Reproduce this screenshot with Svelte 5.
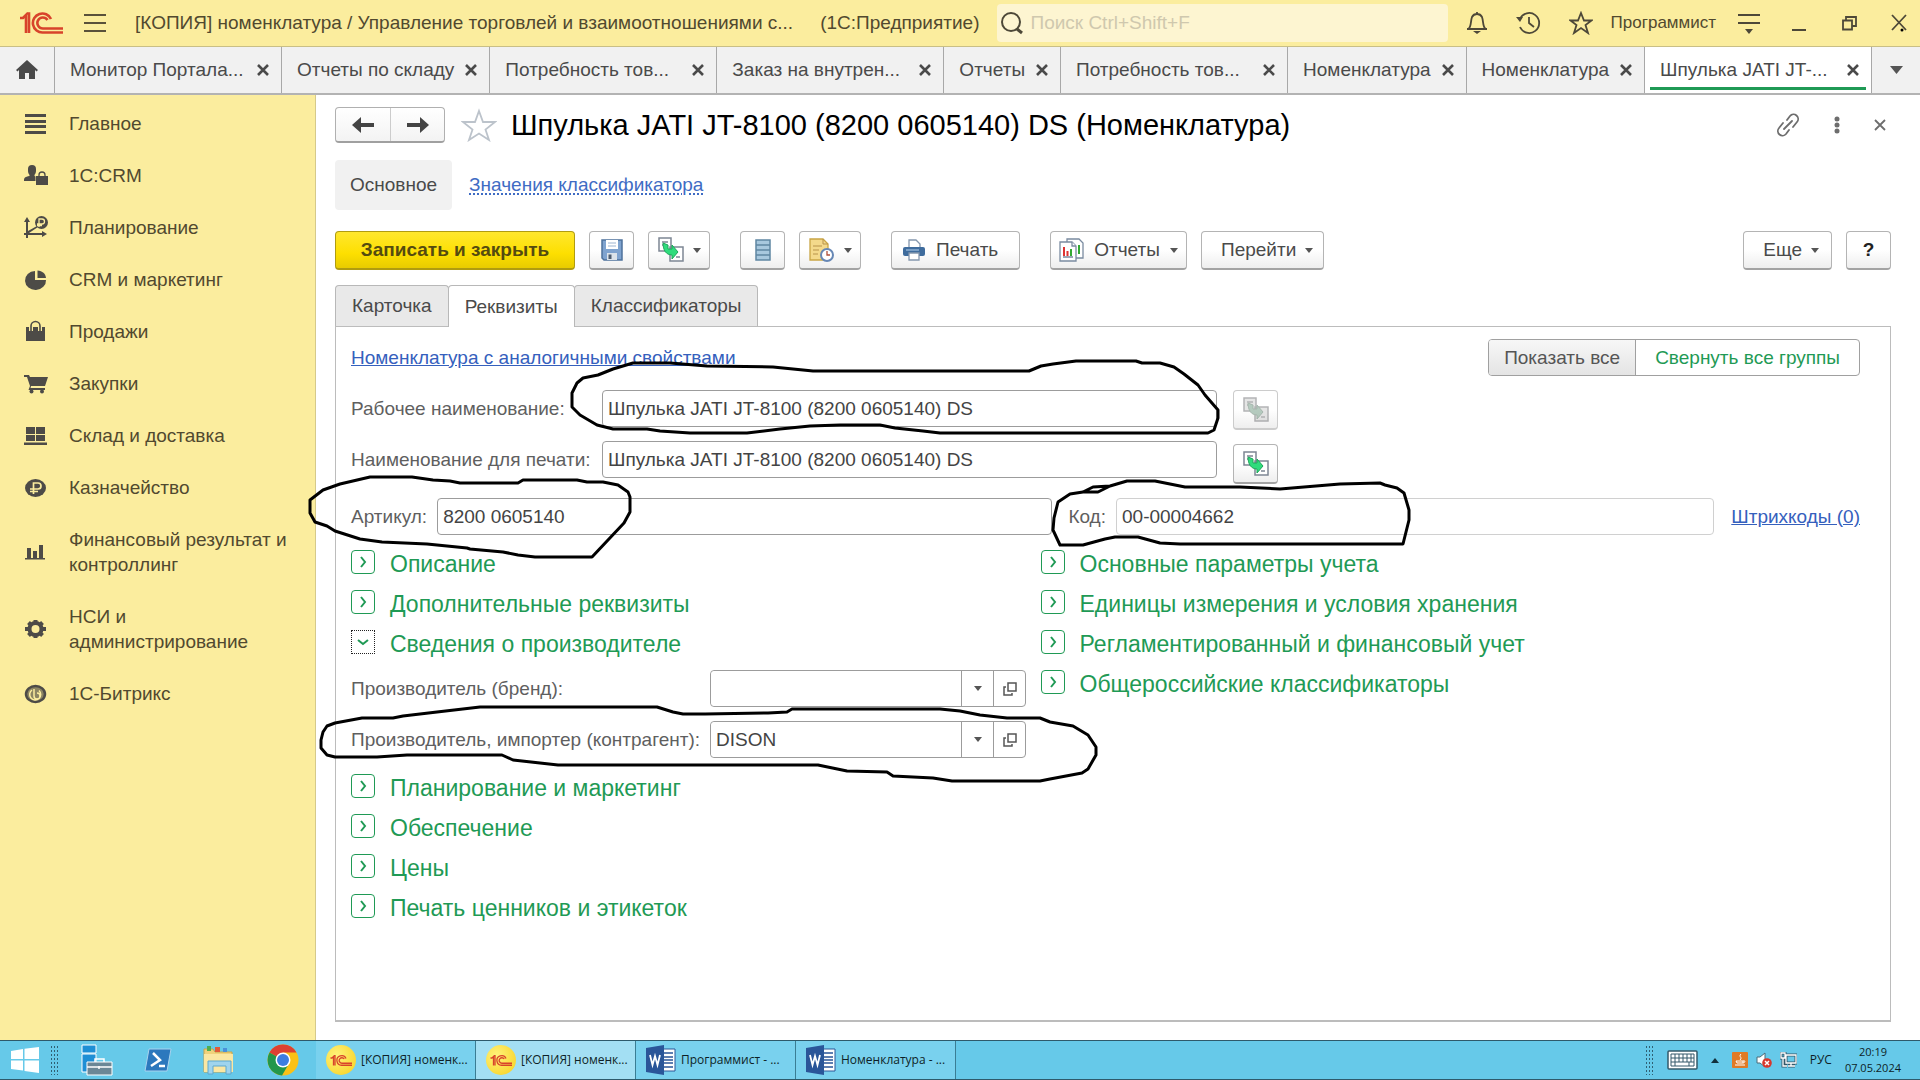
<script>
  const tabs = [
    { title: "Монитор Портала...", long: true },
    { title: "Отчеты по складу" },
    { title: "Потребность тов...", long: true },
    { title: "Заказ на внутрен...", long: true },
    { title: "Отчеты" },
    { title: "Потребность тов...", long: true },
    { title: "Номенклатура" },
    { title: "Номенклатура" },
    { title: "Шпулька JATI JT-...", long: true, active: true },
  ];

  const sections = [
    ["menu", "Главное"],
    ["crm", "1С:CRM"],
    ["plan", "Планирование"],
    ["pie", "CRM и маркетинг"],
    ["bag", "Продажи"],
    ["cart", "Закупки"],
    ["boxes", "Склад и доставка"],
    ["ruble", "Казначейство"],
    ["bars", "Финансовый результат и контроллинг"],
    ["gear", "НСИ и администрирование"],
    ["bitrix", "1С-Битрикс"],
  ];

  const groupsTop = ["Описание", "Дополнительные реквизиты"];
  const groupsBottom = [
    "Планирование и маркетинг",
    "Обеспечение",
    "Цены",
    "Печать ценников и этикеток",
  ];
  const groupsRight = [
    "Основные параметры учета",
    "Единицы измерения и условия хранения",
    "Регламентированный и финансовый учет",
    "Общероссийские классификаторы",
  ];

  const tasks = [
    { app: "1c", title: "[КОПИЯ] номенк..." },
    { app: "1c", title: "[КОПИЯ] номенк...", active: true },
    { app: "word", title: "Программист - ..." },
    { app: "word", title: "Номенклатура - ..." },
  ];

  let name = "Шпулька JATI JT-8100 (8200 0605140) DS";
  let printName = "Шпулька JATI JT-8100 (8200 0605140) DS";
  let article = "8200 0605140";
  let code = "00-00004662";
  let brand = "";
  let vendor = "DISON";
  let opened = true;
</script>

{#snippet logo1c(size)}
  <svg class="logo" width={size} viewBox="0 0 44 22" fill="none" stroke="#d8432b" stroke-width="2.6">
    <path d="M1 6h3l3-3v18M10 21V1.500H8" />
    <path d="M32 7a9.500 9.500 0 1 0-8 13.500h20M28.500 8a5.500 5.500 0 1 0-4.500 8.500h20" />
  </svg>
{/snippet}

{#snippet sectionIcon(kind)}
  <svg width="24" height="24" viewBox="0 0 24 24" fill="#4d4b47" stroke="none">
    {#if kind === "menu"}
      <path d="M1 2h21v3H1zM1 8h21v3H1zM1 13h21v3H1zM1 19h21v3H1z" />
    {:else if kind === "crm"}
      <path d="M4 5a4 4 0 0 1 8 0v2c0 2-1 3-1.500 4v1l1 .500V17H0c0-4 1-4 5.500-5v-1C5 10 4 9 4 7z" />
      <path d="M12 12h12v9H12z" />
      <path d="M15 13v-2a3 3 0 0 1 6 0v2" fill="none" stroke="#4d4b47" stroke-width="1.300" />
    {:else if kind === "plan"}
      <path d="M3 1l3 5H4v9l9-5 1 1-9 6h13v-2l5 3-5 3v-2H4v3H2v-3H0v-2h2V6H0z" />
      <circle cx="17.500" cy="6.500" r="6.500" />
      <path d="M15 11V3h3a2 2 0 0 1 0 5h-5M13 9.500h5" fill="none" stroke="#fbed9e" stroke-width="1.300" />
    {:else if kind === "pie"}
      <path d="M11 3v9h11A10.500 9.500 0 1 1 11 3z" />
      <path d="M13.500 2.500c5 .500 8 3 8.500 7.500h-8.500z" />
    {:else if kind === "bag"}
      <path d="M2 7h19v14H2z" />
      <path d="M7 11V6a4.500 4.500 0 0 1 9 0v5" fill="none" stroke="#fbed9e" stroke-width="4" />
      <path d="M7 11V6a4.500 4.500 0 0 1 9 0v5" fill="none" stroke="#4d4b47" stroke-width="1.600" />
    {:else if kind === "cart"}
      <path d="M0 3h5l1 2h18l-3 9H7l-.500 2H21v2H4.500l1.500-4-3-9H0z" />
      <circle cx="7.500" cy="19.500" r="2" /><circle cx="18" cy="19.500" r="2" />
    {:else if kind === "boxes"}
      <path d="M2 3h9v7H2zM12 3h9v7h-9zM2 11h9v6H2zM12 11h9v6h-9zM0 18.500h23V21H0z" />
    {:else if kind === "ruble"}
      <ellipse cx="11.500" cy="12" rx="10.500" ry="9" />
      <path d="M9.500 18V7H14a3 3 0 0 1 0 6H6M6 15.500h8" fill="none" stroke="#fbed9e" stroke-width="1.700" />
    {:else if kind === "bars"}
      <path d="M3 8h4v10H3zM9 11h4v7H9zM15 5h4v13h-4zM1 18h20v1.500H1z" />
    {:else if kind === "gear"}
      <circle cx="11.500" cy="12" r="6" fill="none" stroke="#4d4b47" stroke-width="4" />
      <path d="M11.500 3v4M11.500 17v4M1 12h4M18 12h4M4.500 5.500l3 3M15.500 15.500l3 3M4.500 18.500l3-3M15.500 8.500l3-3" stroke="#4d4b47" stroke-width="4" />
    {:else}
      <ellipse cx="11.500" cy="12" rx="9.500" ry="8" fill="#8d8663" stroke="#4d4b47" stroke-width="2.500" />
      <path d="M10 7v7a3 3 0 1 0 3-3M8 8a5.500 5.500 0 1 0 7 .500" fill="none" stroke="#fbed9e" stroke-width="1.500" />
    {/if}
  </svg>
{/snippet}

{#snippet copyIcon()}
  <svg width="26" height="26" viewBox="0 0 26 26" fill="#fff" stroke="#7e8794" stroke-width="1.500">
    <path d="M1 1h12v13H1zM12 10h13v14H12z" />
    <path d="M4 5h6M4 8h3M18 20h4" />
    <path d="M5 6l5 2v4h4V8l6 7-6 7v-4C8 18 5 13 5 6z" fill="#2fdc7c" stroke="#1ea65a" stroke-width="1" />
  </svg>
{/snippet}

{#snippet groupTitle(title)}
  <button class="group">
    <span class="box">
      <svg width="12" height="12" viewBox="0 0 12 12"><path d="M4 1l4 5-4 5" /></svg>
    </span>
    {title}
  </button>
{/snippet}

{#snippet openIcon()}
  <svg width="14" height="14" viewBox="0 0 14 14" fill="none" stroke="#555" stroke-width="1.500">
    <path d="M5 1h8v8H5zM3 5H1v8h8v-2" />
  </svg>
{/snippet}

<div class="page">
  <header>
    <a class="home-logo" href="#main" aria-label="1С">{@render logo1c(44)}</a>
    <button class="icon" aria-label="Меню">
      <svg width="22" height="20" viewBox="0 0 22 20" stroke="#5a513a" stroke-width="2">
        <path d="M0 2h22M0 10h22M0 18h22" />
      </svg>
    </button>
    <span class="app-title">[КОПИЯ] номенклатура / Управление торговлей и взаимоотношениями с...</span>
    <span class="platform">(1С:Предприятие)</span>
    <label class="search">
      <svg width="24" height="24" viewBox="0 0 24 24" fill="none" stroke="#4d4838">
        <circle cx="11" cy="11" r="9" stroke-width="2" />
        <path d="M17 18l5 4" stroke-width="3" />
      </svg>
      <input type="search" placeholder="Поиск Ctrl+Shift+F" aria-label="Поиск" />
    </label>
    <div class="tools">
      <button class="icon" aria-label="Уведомления">
        <svg width="22" height="24" viewBox="0 0 22 24" fill="none" stroke="#4d4838" stroke-width="1.800">
          <path d="M1 18h20M2.500 18c3-3 2-8 3.500-12C7 4 8.500 3 11 3s4 1 5 3c1.500 4 .500 9 3.500 12M11 3V1" />
          <path d="M7 20h8l-4 3z" fill="#4d4838" stroke="none" />
        </svg>
      </button>
      <button class="icon" aria-label="История">
        <svg width="25" height="24" viewBox="0 0 25 24" fill="none" stroke="#4d4838" stroke-width="1.800">
          <path d="M4 8a10 10 0 1 1 0 8M13 6v6l5 4" />
          <path d="M0 6l7 0-3 5z" fill="#4d4838" stroke="none" />
        </svg>
      </button>
      <button class="icon" aria-label="Избранное">
        <svg width="24" height="24" viewBox="0 0 24 24" fill="none" stroke="#4d4838" stroke-width="1.800">
          <path d="M12 2l3 7.500h7.500l-6 4.500 2.500 8-7-5-7 5 2.500-8-6-4.500H9z" />
        </svg>
      </button>
      <a class="user" href="#user">Программист</a>
      <button class="icon" aria-label="Настройки">
        <svg width="22" height="22" viewBox="0 0 22 22" stroke="#4d4838" stroke-width="2">
          <path d="M0 3h22M0 11h22" />
          <path d="M7 17h8l-4 5z" fill="#4d4838" stroke="none" />
        </svg>
      </button>
      <button class="icon win" aria-label="Свернуть">
        <svg width="14" height="16" viewBox="0 0 14 16" stroke="#4d4838" stroke-width="2"><path d="M0 15h14" /></svg>
      </button>
      <button class="icon win" aria-label="Развернуть">
        <svg width="15" height="15" viewBox="0 0 15 15" fill="none" stroke="#4d4838" stroke-width="1.800">
          <path d="M1 4.500h9v9H1zM4 4V1h10v9h-3.500" />
        </svg>
      </button>
      <button class="icon win" aria-label="Закрыть">
        <svg width="16" height="18" viewBox="0 0 16 18" fill="none" stroke="#4d4838" stroke-width="1.800">
          <path d="M1 1l14 15M15 1L1 16" />
          <circle cx="11" cy="16" r="1.500" fill="#000" stroke="none" />
        </svg>
      </button>
    </div>
  </header>

  <nav class="tabs">
    <button class="home" aria-label="Начальная страница">
      <svg width="22" height="20" viewBox="0 0 22 20" fill="#4a4a4a">
        <path d="M11 0l11 10-1.500 1.500L19 10v9h-6v-6H9v6H3v-9l-1.500 1.500L0 10z" />
      </svg>
    </button>
    {#each tabs as tab}
      <div class="tab" class:long={tab.long} class:active={tab.active}>
        <a href="#tab">{tab.title}</a>
        <button class="icon" aria-label="Закрыть вкладку">
          <svg width="12" height="12" viewBox="0 0 12 12" stroke="#4a4a4a" stroke-width="2.600"><path d="M1 1l10 10M11 1L1 11" /></svg>
        </button>
      </div>
    {/each}
    <button class="more" aria-label="Все вкладки">
      <svg width="13" height="8" viewBox="0 0 13 8" fill="#555"><path d="M0 0h13L6.500 8z" /></svg>
    </button>
  </nav>

  <div class="body">
    <aside>
      {#each sections as [kind, title]}
        <a href="#section">{@render sectionIcon(kind)}<span>{title}</span></a>
      {/each}
    </aside>

    <main id="main">
      <div class="heading">
        <div class="arrows">
          <button aria-label="Назад">
            <svg width="22" height="16" viewBox="0 0 22 16" fill="#444"><path d="M0 8l9-8v6h13v4H9v6z" /></svg>
          </button>
          <button aria-label="Вперед">
            <svg width="22" height="16" viewBox="0 0 22 16" fill="#444"><path d="M22 8l-9-8v6H0v4h13v6z" /></svg>
          </button>
        </div>
        <button class="icon" aria-label="В избранное">
          <svg width="36" height="34" viewBox="0 0 36 34" fill="none" stroke="#bcc3cb" stroke-width="1.800">
            <path d="M18 3l4 11h12l-9.500 7.500L28 32l-10-6.500L8 32l3.500-10.500L2 14h12z" />
          </svg>
        </button>
        <h1>Шпулька JATI JT-8100 (8200 0605140) DS (Номенклатура)</h1>
        <div class="form-tools">
          <button class="icon" aria-label="Ссылка">
            <svg width="24" height="24" viewBox="0 0 24 24" fill="none" stroke="#6d6d6d" stroke-width="1.800" stroke-linecap="round">
              <path d="M8 16l8-8M11 7l3-4a4.500 4.500 0 0 1 7 6l-4 5M13 17l-3 4a4.500 4.500 0 0 1-7-6l4-5" />
            </svg>
          </button>
          <button class="icon" aria-label="Еще действия">
            <svg width="6" height="18" viewBox="0 0 6 18" fill="#6d6d6d">
              <circle cx="3" cy="3" r="2.500" /><circle cx="3" cy="9" r="2.500" /><circle cx="3" cy="15" r="2.500" />
            </svg>
          </button>
          <button class="icon" aria-label="Закрыть форму">
            <svg width="12" height="12" viewBox="0 0 12 12" stroke="#6d6d6d" stroke-width="1.800"><path d="M1 1l10 10M11 1L1 11" /></svg>
          </button>
        </div>
      </div>

      <div class="subnav">
        <span class="current">Основное</span>
        <a href="#values">Значения классификатора</a>
      </div>

      <div class="toolbar">
        <button class="btn primary">Записать и закрыть</button>
        <button class="btn square" aria-label="Записать">
          <svg width="22" height="22" viewBox="0 0 22 22">
            <path d="M1 1h20v20H3l-2-2z" fill="#7fa3cf" stroke="#4e729c" stroke-width="1.500" />
            <path d="M5 1h12v9H5z" fill="#fff" /><path d="M7 4h8M7 7h8" stroke="#9db4d0" />
            <path d="M6 14h10v7H6z" fill="#dce3ea" /><path d="M7.500 15.500h3V20h-3z" fill="#4e5d70" />
          </svg>
        </button>
        <button class="btn menu" aria-label="Создать на основании">
          {@render copyIcon()}<span class="caret"></span>
        </button>
        <button class="btn square apart" aria-label="Список">
          <svg width="16" height="22" viewBox="0 0 16 22">
            <path d="M1 1h14v20H1z" fill="#a8c8de" stroke="#5f86a3" stroke-width="1.500" />
            <path d="M1 6h14M1 11h14M1 16h14" stroke="#5f86a3" stroke-width="1.500" />
          </svg>
        </button>
        <button class="btn menu" aria-label="Задачи">
          <svg width="26" height="24" viewBox="0 0 26 24">
            <path d="M1 1h13l5 5v16H1z" fill="#f4d98b" stroke="#c9a545" stroke-width="1.300" />
            <path d="M14 1v5h5M4 8h9M4 12h6M4 16h5" fill="none" stroke="#b8934a" />
            <circle cx="18" cy="17" r="6" fill="#fff" stroke="#6687b5" stroke-width="2" />
            <path d="M18 13v4h3" fill="none" stroke="#b0503a" stroke-width="1.300" />
          </svg>
          <span class="caret"></span>
        </button>
        <button class="btn print apart">
          <svg width="22" height="22" viewBox="0 0 22 22">
            <path d="M6 9V1h7l4 4v4" fill="#fff" stroke="#8496ad" stroke-width="1.300" />
            <path d="M2 8h18a2 2 0 0 1 2 2v5a2 2 0 0 1-2 2H2a2 2 0 0 1-2-2v-5a2 2 0 0 1 2-2z" fill="#3f6c9d" />
            <path d="M3 11h13" stroke="#8fb0d3" stroke-width="1.500" />
            <path d="M6 14h10v7H6z" fill="#fff" stroke="#8496ad" stroke-width="1.300" />
          </svg>
          Печать
        </button>
        <button class="btn reports apart">
          <svg width="25" height="24" viewBox="0 0 25 24" fill="#fff" stroke="#7a8ba0" stroke-width="1.300">
            <path d="M8 1h12l4 4v15H8z" />
            <path d="M20 7v9" stroke="#3a3" stroke-width="2" />
            <path d="M1 4h12l4 4v15H1z" />
            <path d="M13 4v4h4M4 19h10" />
            <path d="M5 9v9M8.500 13v5" stroke="#d33" stroke-width="2" />
            <path d="M12 11v7" stroke="#3a3" stroke-width="2" />
          </svg>
          Отчеты<span class="caret"></span>
        </button>
        <button class="btn go">Перейти<span class="caret"></span></button>
        <button class="btn go right">Еще<span class="caret"></span></button>
        <button class="btn square help">?</button>
      </div>

      <div class="form-tabs">
        <button>Карточка</button>
        <button class="selected">Реквизиты</button>
        <button>Классификаторы</button>
      </div>

      <section class="panel">
        <div class="top-row">
          <a href="#similar">Номенклатура с аналогичными свойствами</a>
          <div class="switch">
            <button class="pressed">Показать все</button>
            <button>Свернуть все группы</button>
          </div>
        </div>

        <div class="names">
          <div class="fields">
            <label for="name">Рабочее наименование:</label>
            <input id="name" bind:value={name} />
            <label for="print-name">Наименование для печати:</label>
            <input id="print-name" bind:value={printName} />
          </div>
          <div class="side-buttons">
            <button class="btn square" disabled aria-label="Заполнить наименование">{@render copyIcon()}</button>
            <button class="btn square" aria-label="Заполнить для печати">{@render copyIcon()}</button>
          </div>
        </div>

        <div class="codes">
          <label for="article">Артикул:</label>
          <input id="article" bind:value={article} />
          <label for="code">Код:</label>
          <input id="code" class="pale" bind:value={code} />
          <a href="#barcodes">Штрихкоды (0)</a>
        </div>

        <div class="columns">
          <div class="groups">
            {#each groupsTop as title}
              {@render groupTitle(title)}
            {/each}
            <button class="group" aria-expanded={opened} on:click={() => (opened = !opened)}>
              <span class="box focused">
                <svg width="12" height="12" viewBox="0 0 12 12"><path d="M1 4l5 4 5-4" /></svg>
              </span>
              Сведения о производителе
            </button>
            {#if opened}
              <div class="vendor">
                <label for="brand">Производитель (бренд):</label>
                <div class="picker">
                  <input id="brand" bind:value={brand} />
                  <button aria-label="Выбрать бренд"><span class="caret"></span></button>
                  <button aria-label="Открыть бренд">{@render openIcon()}</button>
                </div>
                <label for="vendor">Производитель, импортер (контрагент):</label>
                <div class="picker">
                  <input id="vendor" bind:value={vendor} />
                  <button aria-label="Выбрать контрагента"><span class="caret"></span></button>
                  <button aria-label="Открыть контрагента">{@render openIcon()}</button>
                </div>
              </div>
            {/if}
            {#each groupsBottom as title}
              {@render groupTitle(title)}
            {/each}
          </div>
          <div class="groups">
            {#each groupsRight as title}
              {@render groupTitle(title)}
            {/each}
          </div>
        </div>
      </section>
    </main>
  </div>

  <footer>
    <button class="start" aria-label="Пуск">
      <svg width="28" height="26" viewBox="0 0 28 26" fill="#fff">
        <path d="M0 4l12-2v10H0zM13.500 1.800L28 0v12H13.500zM0 13.500h12v10L0 22zM13.500 13.500H28V26l-14.500-2z" />
      </svg>
    </button>
    <span class="grip"></span>
    <div class="pinned">
      <button class="icon" aria-label="Диспетчер серверов">
        <svg width="32" height="32" viewBox="0 0 32 32">
          <path d="M1 1h14v8H1zM1 10h14v18H1z" fill="#1e8fd5" stroke="#fff" />
          <path d="M6 18h25v13H6z" fill="#6b8796" stroke="#fff" />
          <path d="M14 18v-3h9v3M6 23h25M18 22v3" fill="none" stroke="#fff" stroke-width="1.500" />
        </svg>
      </button>
      <button class="icon" aria-label="PowerShell">
        <svg width="28" height="24" viewBox="0 0 28 24">
          <path d="M5 1h22l-4 22H1z" fill="#2c78bd" stroke="#a9d3ee" />
          <path d="M9 5l7 7-9 6M15 18h6" fill="none" stroke="#fff" stroke-width="2.500" />
        </svg>
      </button>
      <button class="icon" aria-label="Проводник">
        <svg width="34" height="30" viewBox="0 0 34 30">
          <path d="M2 4h9l2 3h17v20H2z" fill="#f0d27c" stroke="#c9a54a" />
          <path d="M5 1h4v5H5z" fill="#4caf50" /><path d="M13 2h5v5h-5z" fill="#e05a3a" /><path d="M21 3h4v4h-4z" fill="#4a90d9" />
          <path d="M2 9h29v18H2z" fill="#fbe7a3" />
          <path d="M6 29V16h23v13h-5v-8H11v8z" fill="#9fd4ee" stroke="#5da8cf" />
        </svg>
      </button>
      <button class="icon" aria-label="Chrome">
        <svg width="32" height="32" viewBox="0 0 32 32">
          <circle cx="16" cy="16" r="15.500" fill="#fbc116" />
          <path d="M16 16L2.500 8.500A15.500 15.500 0 0 1 29.500 8.500H16z" fill="#dd4032" />
          <path d="M16 16L2.500 8.500A15.500 15.500 0 0 0 15 31.500l7-12z" fill="#23974a" />
          <circle cx="16" cy="16" r="7.500" fill="#fff" /><circle cx="16" cy="16" r="6" fill="#3d7de0" />
        </svg>
      </button>
    </div>
    {#each tasks as task}
      <button class="task" class:active={task.active}>
        {#if task.app === "1c"}
          <span class="coin">{@render logo1c(22)}</span>
        {:else}
          <svg width="30" height="30" viewBox="0 0 30 30">
            <path d="M14 4h15v22H14z" fill="#fff" stroke="#2a5699" />
            <path d="M18 8h9M18 12h9M18 15h9M18 18h9M18 22h9" stroke="#2a5699" stroke-width="1.500" />
            <path d="M0 3l18-3v30L0 27z" fill="#2a5699" />
            <path d="M4 10l2.500 10L9 11l2.500 9L14 10" fill="none" stroke="#fff" stroke-width="1.800" />
          </svg>
        {/if}
        {task.title}
      </button>
    {/each}
    <div class="tray">
      <span class="grip"></span>
      <svg width="31" height="20" viewBox="0 0 31 20">
        <rect x="1" y="1" width="29" height="18" rx="1" fill="#fff" stroke="#35596a" stroke-width="1.500" />
        <path d="M4 4h23v12H4zM4 8h23M4 12h23M8 4v8M12 4v8M16 4v8M20 4v8M24 4v8M8 12v4M22 12v4" fill="none" stroke="#35596a" />
      </svg>
      <svg width="8" height="5" viewBox="0 0 8 5"><path d="M0 5l4-5 4 5z" fill="#12303c" /></svg>
      <div class="tray-icons">
        <svg width="16" height="16" viewBox="0 0 16 16">
          <rect width="16" height="16" rx="1" fill="#e07a26" />
          <path d="M9 2c-3 3 2 3-1 6M4 9h7v2H5zM11 9c3-1 2 2 0 2M3 13h10" fill="none" stroke="#fff" />
        </svg>
        <svg width="16" height="16" viewBox="0 0 16 16">
          <path d="M1 5h3l5-4v14l-5-4H1z" fill="#fff" stroke="#4a6a78" />
          <circle cx="11" cy="11" r="4.800" fill="#d8362c" /><path d="M9 9l4 4M13 9l-4 4" stroke="#fff" stroke-width="1.500" />
        </svg>
        <svg width="17" height="16" viewBox="0 0 17 16" fill="none">
          <path d="M6 3h10v8H6zM8 14h7M11 11v3M1 1h4v5H1zM3 6v8h4" stroke="#35596a" stroke-width="3" />
          <path d="M6 3h10v8H6zM8 14h7M11 11v3M1 1h4v5H1zM3 6v8h4" stroke="#fff" stroke-width="1.300" />
        </svg>
      </div>
      <span>РУС</span>
      <time>20:19<br />07.05.2024</time>
    </div>
  </footer>

  <!-- marker strokes over the form -->
  <svg class="marks" viewBox="0 0 1920 1080" fill="none" stroke="#000" stroke-width="3" stroke-linejoin="round" stroke-linecap="round">
    <path d="M572 393L577 383L583 378L598 375L613 369L633 363H670L707 366L773 367L793 369L813 371H1023L1029 371L1041 366L1053 364L1076 361H1136L1142 363L1160 363L1174 367L1184 374L1198 385L1205 395L1218 410V418L1214 430L1208 433H940L923 431L895 428L880 425H840L810 426L780 429L747 433H690L660 431L647 429L613 429L597 425L580 415L572 407Z" />
    <path d="M310 500L323 490L340 484L370 477H412L433 480L450 481L460 483H518L523 480H577L587 482H603L618 485L628 492L630 497V512L624 523L592 557H535L518 555L503 552L470 549L467 548L427 544L382 542L360 539L335 531L327 526L315 522L310 513Z" />
    <path d="M1058 502L1070 494L1083 492L1093 487L1110 486L1127 481H1155L1170 484L1185 487H1240L1280 489L1340 484L1380 483L1385 485L1397 488L1404 493L1409 510V520L1403 544H1180L1160 543L1138 537H1115L1105 539L1083 545H1060L1053 530L1054 518ZM1083 492H1098L1110 486" />
    <path d="M327 726L335 723L362 718H393L403 716L437 712L480 707H657L673 712L683 714H705L768 713L787 712L792 709H940L960 711L980 715L1007 718H1040L1050 722L1073 726L1088 735L1096 747V755L1088 769L1082 773L1050 779L1040 781H952L933 778L893 776L887 772L847 771L818 765H558L540 763L513 760L502 755H407L377 757H335L327 755L321 748V740L323 732Z" />
  </svg>
</div>

<style>
  :global(body) {
    margin: 0;
    background: #fff;
  }
  .page {
    position: relative;
    display: flex;
    flex-direction: column;
    min-height: 100vh;
    font-family: "Liberation Sans", Arial, sans-serif;
    font-size: 19px;
    line-height: 24px;
    color: #4a4a4a;
  }
  button,
  input {
    font: inherit;
    color: inherit;
    margin: 0;
    padding: 0;
    box-sizing: border-box;
  }
  button {
    border: none;
    background: none;
    white-space: nowrap;
  }
  svg {
    display: block;
    flex: none;
  }
  a {
    color: inherit;
    text-decoration: none;
  }
  .icon {
    display: flex;
    align-items: center;
    justify-content: center;
  }
  .caret {
    border: 4px solid transparent;
    border-top: 5px solid #555;
    border-bottom: none;
  }

  header {
    display: flex;
    align-items: center;
    height: 47px;
    padding: 0 10px 0 19px;
    background: #fbed9e;
    border-bottom: 1px solid #c9bf86;
    box-sizing: border-box;
    color: #51492f;
    white-space: nowrap;
  }
  .home-logo {
    margin-right: 21px;
  }
  .app-title {
    margin-left: 29px;
  }
  .platform {
    margin-left: 27px;
  }
  .search {
    display: flex;
    flex: 1;
    align-items: center;
    gap: 6px;
    height: 38px;
    margin-left: 18px;
    padding-left: 3px;
    border-radius: 4px;
    background: #fdf5d1;
  }
  .search input {
    flex: 1;
    min-width: 0;
    border: none;
    outline: none;
    background: none;
  }
  .search input::placeholder {
    color: #cfc8ae;
  }
  .tools {
    display: flex;
    align-items: center;
    gap: 28px;
    margin-left: 18px;
  }
  .user {
    font-size: 17px;
    margin: 0 -6px 0 -10px;
  }
  .win {
    width: 22px;
  }

  .tabs {
    display: flex;
    height: 48px;
    box-sizing: border-box;
    background: #f1f1f1;
    border-bottom: 2px solid #b3b3b3;
  }
  .home {
    display: flex;
    align-items: center;
    justify-content: center;
    width: 54px;
  }
  .tab {
    position: relative;
    display: flex;
    align-items: center;
    justify-content: space-between;
    gap: 11px;
    padding: 0 12px 0 15px;
    border-left: 1px solid #a8a8a8;
    box-sizing: border-box;
    white-space: nowrap;
  }
  .long {
    width: 227px;
  }
  .active.tab {
    background: #fff;
  }
  .active.tab::after {
    content: "";
    position: absolute;
    left: 5px;
    right: 5px;
    bottom: 3px;
    height: 3px;
    background: #1f9a55;
  }
  .more {
    display: flex;
    flex: 1;
    align-items: center;
    justify-content: center;
    border-left: 1px solid #a8a8a8;
  }

  .body {
    display: flex;
    flex: 1;
  }
  aside {
    display: flex;
    flex-direction: column;
    gap: 27px;
    width: 316px;
    padding: 16px 10px 0 24px;
    box-sizing: border-box;
    background: #fbed9e;
    border-right: 1px solid #d5c98a;
    line-height: 25px;
    color: #51492f;
  }
  aside a {
    display: flex;
    align-items: center;
    gap: 21px;
  }
  main {
    display: flex;
    flex: 1;
    flex-direction: column;
    min-width: 0;
    padding: 12px 29px 18px 19px;
  }

  .heading {
    display: flex;
    align-items: center;
    height: 36px;
  }
  .arrows {
    display: flex;
    border: 1px solid #b0b0b0;
    border-bottom: 2px solid #a0a0a0;
    border-radius: 4px;
    background: linear-gradient(#fff, #f3f3f3);
    margin-right: 16px;
  }
  .arrows button {
    display: flex;
    align-items: center;
    justify-content: center;
    width: 54px;
    height: 33px;
  }
  .arrows button + button {
    border-left: 1px solid #ccc;
  }
  h1 {
    margin: 0 0 0 14px;
    font-size: 29px;
    font-weight: 400;
    color: #000;
    white-space: nowrap;
  }
  .form-tools {
    display: flex;
    align-items: center;
    gap: 34px;
    margin-left: auto;
    padding-right: 5px;
  }

  .subnav {
    display: flex;
    align-items: center;
    gap: 17px;
    margin-top: 17px;
    height: 50px;
  }
  .current {
    padding: 13px 15px;
    border-radius: 4px;
    background: #f1f1f1;
  }
  .subnav a {
    color: #3f6cc4;
    text-decoration: underline dotted;
    text-underline-offset: 3px;
  }

  .toolbar {
    display: flex;
    gap: 14px;
    margin-top: 21px;
  }
  .btn {
    display: flex;
    align-items: center;
    justify-content: center;
    height: 39px;
    border: 1px solid #b4b4b4;
    border-bottom: 2px solid #a3a3a3;
    border-radius: 4px;
    background: linear-gradient(#fff 50%, #eee);
  }
  .btn:disabled {
    border-color: #ccc;
  }
  .btn:disabled svg {
    filter: grayscale(0.7) brightness(0.8);
    opacity: 0.5;
  }
  .primary {
    width: 240px;
    border-color: #b09c10;
    background: linear-gradient(#ffe72e, #fddf00 60%, #e8cc00);
    font-weight: 700;
    color: #544b10;
  }
  .square {
    width: 45px;
  }
  .menu {
    width: 62px;
    gap: 9px;
  }
  .apart {
    margin-left: 16px;
  }
  .print {
    width: 129px;
    gap: 11px;
    justify-content: flex-start;
    padding-left: 11px;
  }
  .reports {
    width: 137px;
    gap: 10px;
  }
  .go {
    gap: 9px;
    padding: 0 10px 0 19px;
  }
  .right {
    margin-left: auto;
    padding-right: 12px;
  }
  .help {
    font-weight: 700;
    color: #222;
  }

  .form-tabs {
    display: flex;
    margin-top: 15px;
  }
  .form-tabs button {
    height: 41px;
    padding: 0 16px;
    border: 1px solid #b8b8b8;
    border-bottom: none;
    border-radius: 4px 4px 0 0;
    background: #e9e9e9;
  }
  .form-tabs .selected {
    position: relative;
    height: 42px;
    margin: 0 -1px -1px;
    background: #fff;
  }

  .panel {
    flex: 1;
    padding: 12px 30px 20px 15px;
    border: 1px solid #bcbcbc;
    border-bottom-width: 2px;
  }
  .panel input,
  .picker {
    height: 37px;
    border: 1px solid #9c9c9c;
    border-radius: 4px;
    background: #fff;
    color: #444;
    min-width: 0;
  }
  .panel input {
    padding: 0 5px;
  }
  .panel input.pale {
    border-color: #d0d0d0;
  }
  .panel label {
    color: #5f5f5f;
    white-space: nowrap;
  }
  .top-row {
    display: flex;
    align-items: center;
    justify-content: space-between;
  }
  .panel a {
    color: #3560bd;
    text-decoration: underline;
    white-space: nowrap;
  }
  .switch {
    display: flex;
    height: 37px;
    border: 1px solid #a0a0a0;
    border-radius: 4px;
    box-sizing: border-box;
    overflow: hidden;
  }
  .switch button {
    padding: 0 19px;
    color: #1f9a55;
  }
  .switch .pressed {
    padding: 0 15px;
    border-right: 1px solid #a0a0a0;
    background: linear-gradient(#f7f7f7, #e4e4e4);
    color: #555;
  }
  .names {
    display: flex;
    gap: 16px;
    margin-top: 14px;
  }
  .fields {
    display: grid;
    grid-template-columns: 251px 615px;
    align-items: center;
    align-content: start;
    gap: 14px 0;
  }
  .side-buttons {
    display: flex;
    flex-direction: column;
    gap: 14px;
  }
  .side-buttons .btn {
    height: 40px;
  }
  .codes {
    display: grid;
    grid-template-columns: auto 615fr auto 598fr auto;
    align-items: center;
    margin-top: 14px;
  }
  .codes label {
    padding-right: 10px;
  }
  .codes input + label {
    padding-left: 16px;
  }
  .codes a {
    margin-left: 17px;
  }

  .columns {
    display: grid;
    grid-template-columns: 690fr 820fr;
    align-items: start;
    margin-top: 15px;
  }
  .groups {
    display: flex;
    flex-direction: column;
    align-items: flex-start;
    gap: 16px;
  }
  .group {
    display: flex;
    align-items: flex-start;
    gap: 15px;
    height: 24px;
    font-size: 23px;
    line-height: 28px;
    color: #1f9a55;
  }
  .box {
    display: flex;
    align-items: center;
    justify-content: center;
    width: 24px;
    height: 24px;
    border: 1px solid #1f9a55;
    border-radius: 4px;
    box-sizing: border-box;
  }
  .box svg {
    fill: none;
    stroke: #1f9a55;
    stroke-width: 2;
  }
  .focused {
    border: 1px dotted #222;
    border-radius: 0;
  }
  .vendor {
    display: grid;
    grid-template-columns: 359px 316px;
    align-items: center;
    gap: 14px 0;
  }
  .picker {
    display: flex;
    box-sizing: border-box;
    overflow: hidden;
  }
  .picker input {
    flex: 1;
    height: 100%;
    border: none;
  }
  .picker button {
    display: flex;
    align-items: center;
    justify-content: center;
    width: 32px;
    border-left: 1px solid #9c9c9c;
  }

  footer {
    display: flex;
    align-items: center;
    height: 40px;
    border-top: 1px solid #2e5a6b;
    border-bottom: 1px solid #2e5a6b;
    box-sizing: border-box;
    background: #66c9e9;
    font-family: "Open Sans", "Noto Sans", sans-serif;
    font-size: 12px;
    line-height: 16px;
    color: #0e1f27;
  }
  .start {
    padding: 0 11px;
  }
  .grip {
    width: 9px;
    height: 30px;
    background: radial-gradient(circle, #2f6073 1px, transparent 1px) 0 0 / 3px 4px;
  }
  .pinned {
    display: flex;
    align-items: center;
    justify-content: space-between;
    width: 218px;
    margin: 0 17px 0 22px;
  }
  .task {
    display: flex;
    align-items: center;
    gap: 5px;
    width: 160px;
    height: 38px;
    padding-left: 10px;
    border: solid #3a7d94;
    border-width: 0 1px 0 0;
    background: #79d1ee;
  }
  .task.active {
    background: #a3dff3;
  }
  .coin {
    display: flex;
    align-items: center;
    justify-content: center;
    width: 30px;
    height: 30px;
    border-radius: 50%;
    background: radial-gradient(circle at 35% 35%, #fff27a, #f7cf1d);
  }
  .tray {
    display: flex;
    align-items: center;
    gap: 13px;
    margin-left: auto;
    padding-right: 19px;
  }
  .tray-icons {
    display: flex;
    gap: 8px;
  }
  time {
    font-size: 11px;
    text-align: center;
  }

  .marks {
    position: absolute;
    top: 0;
    left: 0;
    width: 100%;
    pointer-events: none;
  }
</style>
